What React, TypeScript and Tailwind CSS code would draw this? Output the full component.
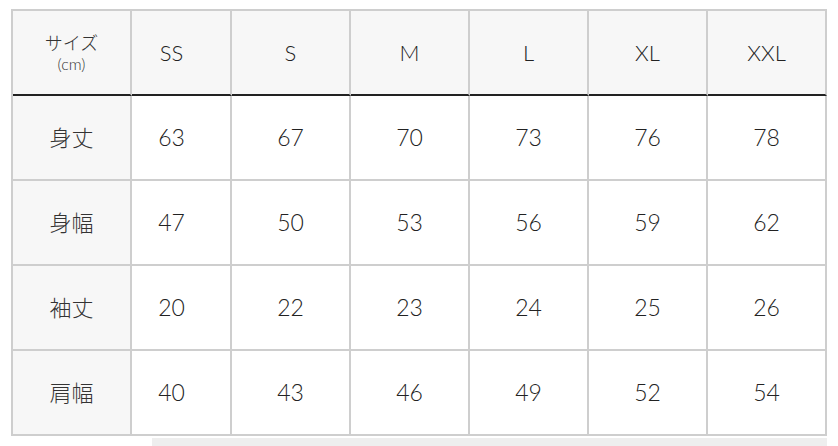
const sizes = ["SS", "S", "M", "L", "XL", "XXL"];

const rows = [
  { label: "身丈", values: [63, 67, 70, 73, 76, 78] },
  { label: "身幅", values: [47, 50, 53, 56, 59, 62] },
  { label: "袖丈", values: [20, 22, 23, 24, 25, 26] },
  { label: "肩幅", values: [40, 43, 46, 49, 52, 54] },
];

const font = { fontFamily: '"Lato", "Noto Sans CJK JP", sans-serif' };

export default function App() {
  return (
    <div className="h-[446px] w-[838px] overflow-hidden bg-white font-light text-[#222]" style={font}>
      <div className="pl-[11px] pt-[9px]">
        <div className="grid w-[816px] grid-cols-[119px_100px_119px_119px_119px_119px_119px] border-l-2 border-t-2 border-[#cecece]">
          {/* header */}
          <div className="flex h-[85px] flex-col items-center justify-center border-b-2 border-r-2 border-b-[#222] border-r-[#cecece] bg-[#f7f7f7] text-[#333]">
            <div className="text-[18px] leading-[22px]">サイズ</div>
            <div className="text-[16px] leading-[20px]">(cm)</div>
          </div>
          {sizes.map((s, i) => (
            <div
              key={s}
              className={`flex h-[85px] items-center justify-center border-b-2 border-r-2 border-b-[#222] border-r-[#cecece] bg-[#f7f7f7] text-[22px] ${
                i === 0 ? "pr-[19px]" : ""
              }`}
            >
              {s}
            </div>
          ))}

          {rows.map((r) => (
            <div key={r.label} className="contents">
              <div className="flex h-[85px] items-center justify-center border-b-2 border-r-2 border-[#cecece] bg-[#f7f7f7] text-[22px] text-[#333]">
                {r.label}
              </div>
              {r.values.map((v, i) => (
                <div
                  key={i}
                  className={`flex h-[85px] items-center justify-center border-b-2 border-r-2 border-[#cecece] text-[23px] ${
                    i === 0 ? "pr-[19px]" : ""
                  }`}
                >
                  {v}
                </div>
              ))}
            </div>
          ))}
        </div>
        <div className="ml-[141px] mt-[2px] h-[12px] w-[675px] bg-[#eeeeee]" />
      </div>
    </div>
  );
}
